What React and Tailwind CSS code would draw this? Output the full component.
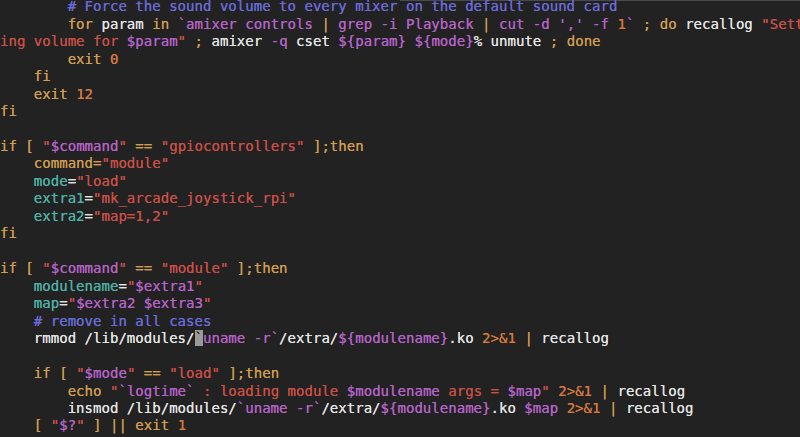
import React from "react";

const W = "text-[#e4e4e4]";
const K = "text-[#d09c50]";
const N = "text-[#d6773f]";
const S = "text-[#c94f47]";
const M = "text-[#b562c8]";
const C = "text-[#6a6ad9]";
const T = "text-[#4fb0a6]";
const CUR = "bg-[#9a9a9a] text-[#2a2a2a]";

const lines = [
  [[C, "        # Force the sound volume to every mixer on the default sound card"]],
  [
    [W, "        "], [K, "for"], [W, " param "], [K, "in"], [W, " "],
    [M, "`amixer controls "], [K, "|"], [M, " grep -i Playback "], [K, "|"],
    [M, " cut -d ',' -f "], [N, "1"], [M, "`"], [W, " "], [K, ";"], [W, " "],
    [K, "do"], [W, " recallog "], [S, "\"Sett"],
  ],
  [
    [S, "ing volume for "], [M, "$param"], [S, "\""], [W, " "], [K, ";"],
    [W, " amixer "], [M, "-q"], [W, " cset "], [M, "${param}"], [W, " "],
    [M, "${mode}"], [W, "% unmute "], [K, ";"], [W, " "], [K, "done"],
  ],
  [[W, "        "], [K, "exit"], [W, " "], [N, "0"]],
  [[W, "    "], [K, "fi"]],
  [[W, "    "], [K, "exit"], [W, " "], [N, "12"]],
  [[K, "fi"]],
  [],
  [
    [K, "if [ "], [S, "\""], [M, "$command"], [S, "\""], [K, " == "],
    [S, "\"gpiocontrollers\""], [K, " ];then"],
  ],
  [[W, "    "], [K, "command="], [S, "\"module\""]],
  [[W, "    "], [T, "mode"], [W, "="], [S, "\"load\""]],
  [[W, "    "], [T, "extra1"], [W, "="], [S, "\"mk_arcade_joystick_rpi\""]],
  [[W, "    "], [T, "extra2"], [W, "="], [S, "\"map=1,2\""]],
  [[K, "fi"]],
  [],
  [
    [K, "if [ "], [S, "\""], [M, "$command"], [S, "\""], [K, " == "],
    [S, "\"module\""], [K, " ];then"],
  ],
  [[W, "    "], [T, "modulename"], [W, "="], [S, "\""], [M, "$extra1"], [S, "\""]],
  [
    [W, "    "], [T, "map"], [W, "="], [S, "\""], [M, "$extra2"], [S, " "],
    [M, "$extra3"], [S, "\""],
  ],
  [[C, "    # remove in all cases"]],
  [
    [W, "    rmmod /lib/modules/"], [CUR, "`"], [M, "uname -r`"], [W, "/extra/"],
    [M, "${modulename}"], [W, ".ko "], [N, "2>&1"], [W, " "], [K, "|"],
    [W, " recallog"],
  ],
  [],
  [
    [W, "    "], [K, "if [ "], [S, "\""], [M, "$mode"], [S, "\""], [K, " == "],
    [S, "\"load\""], [K, " ];then"],
  ],
  [
    [W, "        "], [K, "echo"], [W, " "], [S, "\""], [M, "`logtime`"],
    [S, " : loading module "], [M, "$modulename"], [S, " args = "], [M, "$map"],
    [S, "\""], [W, " "], [N, "2>&1"], [W, " "], [K, "|"], [W, " recallog"],
  ],
  [
    [W, "        insmod /lib/modules/"], [M, "`uname -r`"], [W, "/extra/"],
    [M, "${modulename}"], [W, ".ko "], [M, "$map"], [W, " "], [N, "2>&1"],
    [W, " "], [K, "|"], [W, " recallog"],
  ],
  [
    [W, "    "], [K, "[ "], [S, "\""], [M, "$?"], [S, "\""], [K, " ] || exit "],
    [N, "1"],
  ],
  [[W, " ".repeat(77)], ["text-[#7a7a7a]", "173,24         88%"]],
];

export default function App() {
  return (
    <div className="w-[800px] h-[437px] overflow-hidden bg-[#222222] flex flex-col">
      <div className="flex h-px shrink-0">
        <div className="w-[400px]" />
        <div className="flex-1 bg-[#4a4a4a]" />
      </div>
      <div
        className="mt-[-2.8px] text-[14.05px] leading-[17.47px] whitespace-pre [text-shadow:0_0_0.6px_currentColor]"
        style={{ fontFamily: '"DejaVu Sans Mono", "Liberation Mono", monospace' }}
      >
        {lines.map((segs, i) => (
          <div key={i} className="h-[17.47px]">
            {segs.length === 0 ? " " : segs.map(([cls, txt], j) => (
              <span key={j} className={cls}>{txt}</span>
            ))}
          </div>
        ))}
      </div>
    </div>
  );
}
